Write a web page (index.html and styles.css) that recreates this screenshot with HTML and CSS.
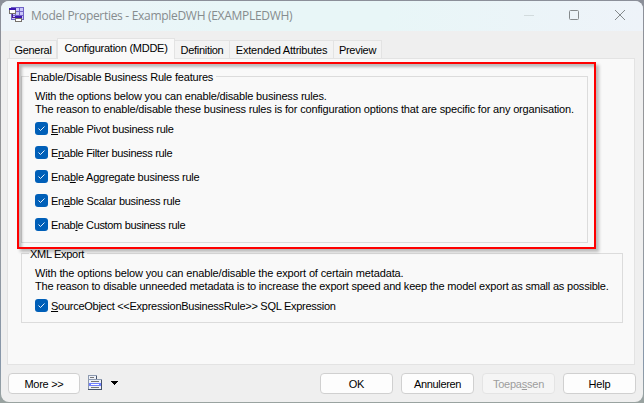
FILE: index.html
```html
<!DOCTYPE html>
<html lang="en">
<head>
<meta charset="utf-8">
<title>Model Properties</title>
<link rel="stylesheet" href="styles.css">
</head>
<body>
<main class="window">
  <header class="titlebar">
    <svg class="app-icon" width="16" height="16" viewBox="0 0 16 16" shape-rendering="crispEdges">
      <path d="M2 0H15V13H2Z" fill="#c9c5fa"/>
      <path d="M2.500 .5H14.500V12.500H2.500ZM6.500 0V13M10.500 0V13M2 4.500H15M2 8.500H15" fill="none" stroke="#6f63c6"/>
      <path d="M.5 2.500H6.500V6.500H.5Z" fill="#fff" stroke="#77726c"/>
      <path d="M0 1H7V3H0ZM6 9H13V11H6Z" fill="#3c16b0"/>
      <path d="M6.500 11.500H12.500V14.500H6.500Z" fill="#fff" stroke="#77726c"/>
      <path d="M3.500 7V10.500H6" fill="none" stroke="#50208a"/>
    </svg>
    <h1 class="title">Model Properties - ExampleDWH (EXAMPLEDWH)</h1>
    <svg class="caption-icons" width="102" height="12" viewBox="0 0 102 12" fill="none" stroke="#858a8c">
      <path d="M0 6.500H10" stroke="#d2dbdd"/>
      <rect x="45.500" y="1.500" width="9" height="9" rx="1"/>
      <path d="M91 1L101 11M101 1L91 11"/>
    </svg>
  </header>

  <nav class="tabs">
    <span class="tab general">General</span>
    <span class="tab active">Configuration (MDDE)</span>
    <span class="tab definition">Definition</span>
    <span class="tab extended">Extended Attributes</span>
    <span class="tab preview">Preview</span>
  </nav>

  <section class="panel">
    <div class="group rules">
      <h2 class="legend l1">Enable/Disable Business Rule features</h2>
      <p class="intro"><span class="t1">With the options below you can enable/disable business rules.</span><br><span class="t2">The reason to enable/disable these business rules is for configuration options that are specific for any organisation.</span></p>
      <div class="option"><svg class="check" viewBox="0 0 13 13"><path d="M3.500 6.500L5.500 8.500L9.500 4.500"/></svg><span class="o1"><u>E</u>nable Pivot business rule</span></div>
      <div class="option"><svg class="check" viewBox="0 0 13 13"><path d="M3.500 6.500L5.500 8.500L9.500 4.500"/></svg><span class="o2">E<u>n</u>able Filter business rule</span></div>
      <div class="option"><svg class="check" viewBox="0 0 13 13"><path d="M3.500 6.500L5.500 8.500L9.500 4.500"/></svg><span class="o3">Ena<u>b</u>le Aggregate business rule</span></div>
      <div class="option"><svg class="check" viewBox="0 0 13 13"><path d="M3.500 6.500L5.500 8.500L9.500 4.500"/></svg><span class="o4">En<u>a</u>ble Scalar business rule</span></div>
      <div class="option"><svg class="check" viewBox="0 0 13 13"><path d="M3.500 6.500L5.500 8.500L9.500 4.500"/></svg><span class="o5">Enab<u>l</u>e Custom business rule</span></div>
    </div>
    <div class="group export">
      <h2 class="legend l2">XML Export</h2>
      <p class="intro"><span class="t3">With the options below you can enable/disable the export of certain metadata.</span><br><span class="t4">The reason to disable unneeded metadata is to increase the export speed and keep the model export as small as possible.</span></p>
      <div class="option"><svg class="check" viewBox="0 0 13 13"><path d="M3.500 6.500L5.500 8.500L9.500 4.500"/></svg><span class="o6"><u>S</u>ourceObject &lt;&lt;ExpressionBusinessRule&gt;&gt; SQL Expression</span></div>
    </div>
    <div class="highlight"></div>
  </section>

  <footer class="actions">
    <button class="more">More &gt;&gt;</button>
    <svg class="menu-icon" width="30" height="16" viewBox="0 0 30 16" shape-rendering="crispEdges">
      <path d="M0 0H9V4H14V15H0Z" fill="#8d9ab0"/>
      <path d="M1 1H8V4H1ZM1 5H13V14H1Z" fill="#eef1f8"/>
      <path d="M8 1H9V4H8ZM13 5H14V15H13ZM0 14H14V15H0Z" fill="#46536b"/>
      <path d="M2 2H6V3H2ZM3 6H11V7H3ZM3 12H11V13H3Z" fill="#777"/>
      <path d="M1 8H13V11H1Z" fill="#7180ff"/>
      <path d="M3 9H11V10H3Z" fill="#fff"/>
      <path d="M23 6H30V7H29V8H28V9H27V10H26V9H25V8H24V7H23Z" fill="#000"/>
    </svg>
    <button class="ok">OK</button>
    <button class="annuleren">Annuleren</button>
    <button class="disabled">Toepa<u>s</u>sen</button>
    <button class="help">Help</button>
  </footer>
</main>
</body>
</html>
```

FILE: styles.css
```css
* { box-sizing: border-box; }
body {
  margin: 0;
  width: 644px;
  height: 403px;
  overflow: hidden;
  padding: 1px;
  background: linear-gradient(#8b8f99, #9a9a9a 45%, #8797aa 90%, #9aa3a0);
  font: 11px/13px "Liberation Sans", Arial, sans-serif;
  color: #000;
}
.window {
  width: 642px;
  height: 401px;
  display: flex;
  flex-direction: column;
  background: #efefef;
  border-radius: 8px;
  overflow: hidden;
}
.titlebar {
  height: 30px;
  flex: none;
  display: flex;
  align-items: center;
  padding: 0 17px 2px 8px;
  background: linear-gradient(90deg, #edf4f9, #e8f6f7 35%, #e8f6f7 60%, #eef3f9);
}
.title {
  margin: 2px auto 0 6px;
  font: 12px/16px "Open Sans", "Noto Sans", sans-serif;
  letter-spacing: -.3px;
  color: #868c8e;
  white-space: nowrap;
}
.tabs {
  height: 27px;
  flex: none;
  display: flex;
  align-items: flex-end;
  padding-left: 8px;
  position: relative;
  z-index: 1;
}
.tab {
  height: 19px;
  margin-bottom: -1px;
  padding-top: 3px;
  border: 1px solid #e3e3e3;
  border-left-width: 0;
  background: #f3f3f3;
  text-align: center;
  white-space: nowrap;
}
.general { width: 48px; border-left-width: 1px; letter-spacing: -.28px; }
.active {
  width: 118px;
  height: 21px;
  background: #f9f9f9;
  border-bottom: 0;
  border-left-width: 1px;
  letter-spacing: -.25px;
}
.definition { width: 55px; letter-spacing: -.3px; }
.extended { width: 104px; letter-spacing: -.21px; }
.preview { width: 48px; letter-spacing: -.28px; }
.panel {
  position: relative;
  height: 307px;
  flex: none;
  margin: 0 8px 0 6px;
  padding: 17px 10px 0 13px;
  border: 1px solid #e3e3e3;
  background: #f9f9f9;
}
.group {
  border: 1px solid #dcdcdc;
  padding: 14px 0 0 13px;
}
.rules { width: 567px; height: 167px; }
.export { width: 602px; height: 70px; margin-top: 10px; }
.legend {
  width: max-content;
  margin: -20px 0 6px -6px;
  padding: 0 3px 0 1px;
  background: #f9f9f9;
  font: inherit;
  white-space: nowrap;
}
.intro { margin: 0 0 6px; white-space: nowrap; }
.option {
  height: 13px;
  margin-bottom: 11px;
  display: flex;
  align-items: center;
  gap: 3px;
  white-space: nowrap;
}
.option span { padding-top: 1px; }
.l1 { letter-spacing: -.19px; }
.l2 { letter-spacing: -.3px; }
.t1 { letter-spacing: -.18px; }
.t2 { letter-spacing: -.175px; }
.t3 { letter-spacing: -.13px; }
.t4 { letter-spacing: -.2px; }
.o1 { letter-spacing: -.27px; }
.o2 { letter-spacing: -.31px; }
.o3 { letter-spacing: -.23px; }
.o4 { letter-spacing: -.26px; }
.o5 { letter-spacing: -.33px; }
.o6 { letter-spacing: -.27px; }
.check {
  width: 13px;
  height: 13px;
  border-radius: 3px;
  background: #005fb8;
  fill: none;
  stroke: #e6f0fa;
}
u { text-underline-offset: 1px; text-decoration-thickness: 1px; text-decoration-skip-ink: none; }
.highlight {
  position: absolute;
  left: 9px;
  top: 3px;
  width: 579px;
  height: 187px;
  border: 2px solid #fe0000;
  box-shadow: 3px 3px 3px rgba(0, 0, 0, .25), inset 3px 3px 3px rgba(0, 0, 0, .25);
}
.actions {
  display: flex;
  align-items: flex-start;
  gap: 8px;
  padding: 8px 7px 0;
}
button {
  width: 73px;
  height: 21px;
  padding: 1px 0 0;
  border: 1px solid #d0d0d0;
  border-radius: 4px;
  background: #fdfdfd;
  font: inherit;
  color: #000;
}
.more { width: 72px; letter-spacing: -.28px; }
.menu-icon { margin: 2px 0 0; }
.ok { margin-left: auto; letter-spacing: -.1px; }
.annuleren { letter-spacing: -.35px; }
.disabled { color: #9d9d9d; background: #f5f5f5; border-color: #e4e4e4; letter-spacing: -.22px; }
.help { letter-spacing: -.1px; }
```
